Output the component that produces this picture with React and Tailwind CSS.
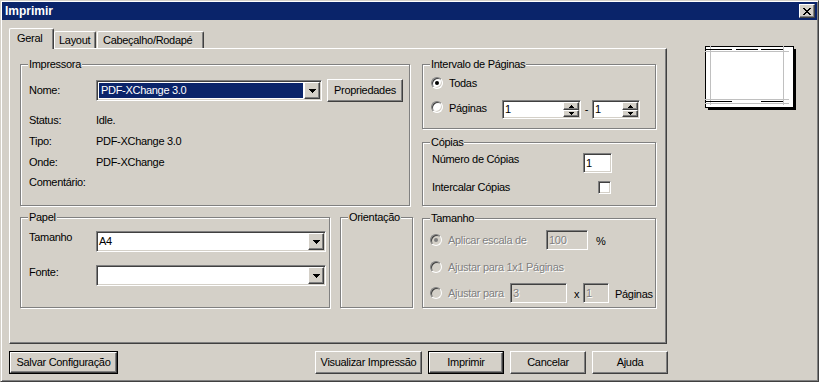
import React from 'react';

// classic win2000 bevels
const raised = 'border border-t-white border-l-white border-b-[#404040] border-r-[#404040] shadow-[inset_-1px_-1px_0_#808080]';
const sunken = 'border border-t-[#808080] border-l-[#808080] border-b-white border-r-white shadow-[inset_1px_1px_0_#404040,inset_-1px_-1px_0_#d4d0c8]';
const grayText = 'text-[#808080] [text-shadow:1px_1px_0_#fff]';

const DownArrow = () => (
  <svg width="7" height="4" shapeRendering="crispEdges" className="block">
    <rect x="0" y="0" width="7" height="1" fill="#000" />
    <rect x="1" y="1" width="5" height="1" fill="#000" />
    <rect x="2" y="2" width="3" height="1" fill="#000" />
    <rect x="3" y="3" width="1" height="1" fill="#000" />
  </svg>
);

const SmallArrow = ({ up }) => (
  <svg width="5" height="3" shapeRendering="crispEdges" className="block">
    {up ? (
      <>
        <rect x="2" y="0" width="1" height="1" fill="#000" />
        <rect x="1" y="1" width="3" height="1" fill="#000" />
        <rect x="0" y="2" width="5" height="1" fill="#000" />
      </>
    ) : (
      <>
        <rect x="0" y="0" width="5" height="1" fill="#000" />
        <rect x="1" y="1" width="3" height="1" fill="#000" />
        <rect x="2" y="2" width="1" height="1" fill="#000" />
      </>
    )}
  </svg>
);

const Group = ({ label, className, children }) => (
  <div className={`relative shrink-0 border border-[#808080] shadow-[1px_1px_0_#fff,inset_1px_1px_0_#fff] ${className}`}>
    <span className="absolute left-[7px] top-[-6px] bg-[#d4d0c8] px-px leading-[11px] whitespace-nowrap">{label}</span>
    {children}
  </div>
);

const Combo = ({ className, value, selected }) => (
  <div className={`${sunken} bg-white h-[21px] flex p-px shrink-0 ${className}`}>
    <div className="flex-1 flex">
      {selected ? (
        <div className="flex-1 m-px bg-[#0a246a] text-white flex items-center pl-[2px]">{value}</div>
      ) : (
        <div className="flex-1 flex items-center pl-[1px]">{value}</div>
      )}
    </div>
    <div className={`${raised} bg-[#d4d0c8] w-[16px] flex items-center justify-center`}>
      <DownArrow />
    </div>
  </div>
);

const Spin = ({ className, value }) => (
  <div className={`${sunken} bg-white h-[19px] flex p-px shrink-0 ${className}`}>
    <div className="flex-1 flex items-center pl-[1px]">{value}</div>
    <div className="w-[16px] flex flex-col">
      <div className={`${raised} bg-[#d4d0c8] h-[8px] flex items-center justify-center`}>
        <SmallArrow up />
      </div>
      <div className={`${raised} bg-[#d4d0c8] h-[7px] flex items-center justify-center`}>
        <SmallArrow />
      </div>
    </div>
  </div>
);

const Field = ({ className, value, disabled }) => (
  <div className={`${sunken} h-[20px] flex items-center pl-[2px] shrink-0 ${disabled ? `bg-[#d4d0c8] ${grayText}` : 'bg-white'} ${className}`}>
    {value}
  </div>
);

const Radio = ({ checked, disabled }) => (
  <div className={`w-[12px] h-[12px] shrink-0 rounded-full border border-t-[#808080] border-l-[#808080] border-b-white border-r-white shadow-[inset_1px_1px_0_#404040,inset_-1px_-1px_0_#d4d0c8] flex items-center justify-center ${disabled ? 'bg-[#d4d0c8]' : 'bg-white'}`}>
    {checked && <div className={`w-[4px] h-[4px] rounded-full ${disabled ? 'bg-[#808080]' : 'bg-black'}`} />}
  </div>
);

const Button = ({ children, className, isDefault }) =>
  isDefault ? (
    <div className={`border border-black h-[23px] shrink-0 ${className}`}>
      <div className={`${raised} h-full flex items-center justify-center`}>{children}</div>
    </div>
  ) : (
    <div className={`${raised} h-[23px] shrink-0 flex items-center justify-center ${className}`}>{children}</div>
  );

const Preview = () => (
  <svg width="92" height="65" shapeRendering="crispEdges" className="block">
    <rect x="3" y="3" width="88" height="61" fill="#000" />
    <rect x="0.5" y="0.5" width="88" height="61" fill="#fff" stroke="#000" />
    <rect x="5" y="0" width="1" height="59" fill="#c0c0c0" />
    <rect x="78" y="0" width="1" height="59" fill="#c0c0c0" />
    <rect x="0" y="5" width="84" height="1" fill="#c0c0c0" />
    <rect x="0" y="53" width="84" height="1" fill="#c0c0c0" />
    <rect x="0" y="57" width="84" height="1" fill="#c0c0c0" />
    <rect x="1" y="3" width="26" height="1" fill="#000" />
    <rect x="31" y="3" width="22" height="1" fill="#000" />
    <rect x="56" y="3" width="22" height="1" fill="#000" />
    <rect x="1" y="55" width="26" height="1" fill="#000" />
    <rect x="56" y="55" width="22" height="1" fill="#000" />
  </svg>
);

export default function App() {
  return (
    <div className="w-[819px] h-[382px] overflow-hidden bg-[#d4d0c8] p-px border border-t-[#d4d0c8] border-l-[#d4d0c8] border-b-[#404040] border-r-[#404040] shadow-[inset_1px_1px_0_#fff,inset_-1px_-1px_0_#808080] font-['Liberation_Sans',Arial,sans-serif] text-[11px] tracking-[-0.3px] leading-none text-black select-none">
      {/* title bar */}
      <div className="h-[18px] bg-[#0a246a] flex items-center justify-between pl-[3px] pr-[2px]">
        <span className="text-white font-bold text-[12px] tracking-normal">Imprimir</span>
        <div className={`${raised} bg-[#d4d0c8] w-[16px] h-[14px] flex items-center justify-center`}>
          <svg width="8" height="7" shapeRendering="crispEdges" className="block">
            <path d="M0 0h2v1h-2zM6 0h2v1h-2zM1 1h2v1h-2zM5 1h2v1h-2zM2 2h4v1h-4zM3 3h2v1h-2zM2 4h4v1h-4zM1 5h2v1h-2zM5 5h2v1h-2zM0 6h2v1h-2zM6 6h2v1h-2z" fill="#000" />
          </svg>
        </div>
      </div>

      <div className="flex items-start pl-[7px]">
        <div className="mt-[8px] w-[659px] flex flex-col">
          {/* tabs */}
          <div className="flex items-end h-[20px]">
            <div className="relative z-10 -mb-px h-[21px] w-[45px] bg-[#d4d0c8] border-t border-l border-r border-t-white border-l-white border-r-[#404040] rounded-t-[2px] shadow-[inset_-1px_0_0_#808080] pl-[7px] pt-[4px]">
              Geral
            </div>
            <div className="h-[17px] w-[42px] border-t border-l border-r border-t-white border-l-white border-r-[#404040] rounded-t-[2px] shadow-[inset_-1px_0_0_#808080] pl-[4px] pt-[3px]">
              Layout
            </div>
            <div className="ml-px h-[17px] w-[107px] border-t border-l border-r border-t-white border-l-white border-r-[#404040] rounded-t-[2px] shadow-[inset_-1px_0_0_#808080] pl-[5px] pt-[3px] whitespace-nowrap">
              Cabeçalho/Rodapé
            </div>
          </div>

          {/* panel */}
          <div className="h-[296px] w-[658px] border border-t-white border-l-white border-b-[#404040] border-r-[#404040] shadow-[inset_-1px_-1px_0_#808080] flex pl-[10px] pt-[15px]">
            <div className="w-[392px] flex flex-col">
              <Group label="Impressora" className="w-[390px] h-[142px] pl-[8px] pt-[14px] flex flex-col">
                <div className="flex items-center h-[23px]">
                  <span className="w-[67px]">Nome:</span>
                  <Combo className="w-[226px]" value="PDF-XChange 3.0" selected />
                  <Button className="ml-[5px] w-[76px]">Propriedades</Button>
                </div>
                <div className="flex items-center h-[22px] mt-[7px]">
                  <span className="w-[67px]">Status:</span>
                  <span>Idle.</span>
                </div>
                <div className="flex items-center h-[21px]">
                  <span className="w-[67px]">Tipo:</span>
                  <span>PDF-XChange 3.0</span>
                </div>
                <div className="flex items-center h-[20px]">
                  <span className="w-[67px]">Onde:</span>
                  <span>PDF-XChange</span>
                </div>
                <div className="flex items-center h-[20px]">
                  <span className="w-[67px]">Comentário:</span>
                </div>
              </Group>

              <div className="flex mt-[11px]">
                <Group label="Papel" className="w-[310px] h-[91px] pl-[8px] pt-[13px] flex flex-col">
                  <div className="flex items-start h-[21px]">
                    <span className="w-[67px] h-[12px] flex items-center">Tamanho</span>
                    <Combo className="w-[230px]" value="A4" />
                  </div>
                  <div className="flex items-start h-[21px] mt-[13px]">
                    <span className="w-[67px] h-[12px] mt-px flex items-center">Fonte:</span>
                    <Combo className="w-[230px]" value="" />
                  </div>
                </Group>
                <Group label="Orientação" className="ml-[10px] w-[73px] h-[91px]" />
              </div>
            </div>

            <div className="ml-[10px] flex flex-col">
              <Group label="Intervalo de Páginas" className="w-[234px] h-[65px] pl-[8px] pt-[12px] flex flex-col">
                <div className="flex items-center h-[12px]">
                  <Radio checked />
                  <span className="ml-[6px]">Todas</span>
                </div>
                <div className="flex items-start h-[19px] mt-[11px]">
                  <div className="mt-px">
                    <Radio />
                  </div>
                  <span className="ml-[6px] w-[53px] h-[12px] mt-[2px] flex items-center">Páginas</span>
                  <Spin className="w-[79px]" value="1" />
                  <span className="w-[11px] h-[19px] flex items-center justify-center">-</span>
                  <Spin className="w-[48px]" value="1" />
                </div>
              </Group>

              <Group label="Cópias" className="mt-[13px] w-[234px] h-[64px] pl-[9px] pt-[10px] flex flex-col">
                <div className="flex items-start h-[20px]">
                  <span className="w-[151px] h-[12px] flex items-center">Número de Cópias</span>
                  <Field className="w-[29px]" value="1" />
                </div>
                <div className="flex items-center h-[13px] mt-[8px]">
                  <span className="w-[166px]">Intercalar Cópias</span>
                  <div className={`${sunken} bg-white w-[13px] h-[13px]`} />
                </div>
              </Group>

              <Group label="Tamanho" className="mt-[12px] w-[234px] h-[90px] pl-[7px] pt-[11px] flex flex-col">
                <div className="flex items-center h-[20px]">
                  <Radio checked disabled />
                  <span className={`ml-[6px] w-[98px] ${grayText}`}>Aplicar escala de</span>
                  <Field className="w-[42px]" value="100" disabled />
                  <span className="ml-[8px] mt-[3px]">%</span>
                </div>
                <div className="flex items-center h-[12px] mt-[11px]">
                  <Radio disabled />
                  <span className={`ml-[6px] ${grayText}`}>Ajustar para 1x1 Páginas</span>
                </div>
                <div className="flex items-center h-[20px] mt-[10px]">
                  <Radio disabled />
                  <span className={`ml-[6px] w-[62px] ${grayText}`}>Ajustar para</span>
                  <Field className="w-[57px]" value="3" disabled />
                  <span className="w-[16px] pl-[7px] mt-[3px]">x</span>
                  <Field className="w-[26px]" value="1" disabled />
                  <span className="ml-[6px] mt-[3px]">Páginas</span>
                </div>
              </Group>
            </div>
          </div>

          {/* bottom buttons */}
          <div className="mt-[7px] flex">
            <Button className="w-[109px]" isDefault>Salvar Configuração</Button>
            <div className="flex-1" />
            <Button className="w-[107px]">Visualizar Impressão</Button>
            <Button className="ml-[6px] w-[76px]" isDefault>Imprimir</Button>
            <Button className="ml-[6px] w-[76px]">Cancelar</Button>
            <Button className="ml-[6px] w-[76px]">Ajuda</Button>
          </div>
        </div>

        <div className="ml-[37px] mt-[26px]">
          <Preview />
        </div>
      </div>
    </div>
  );
}
